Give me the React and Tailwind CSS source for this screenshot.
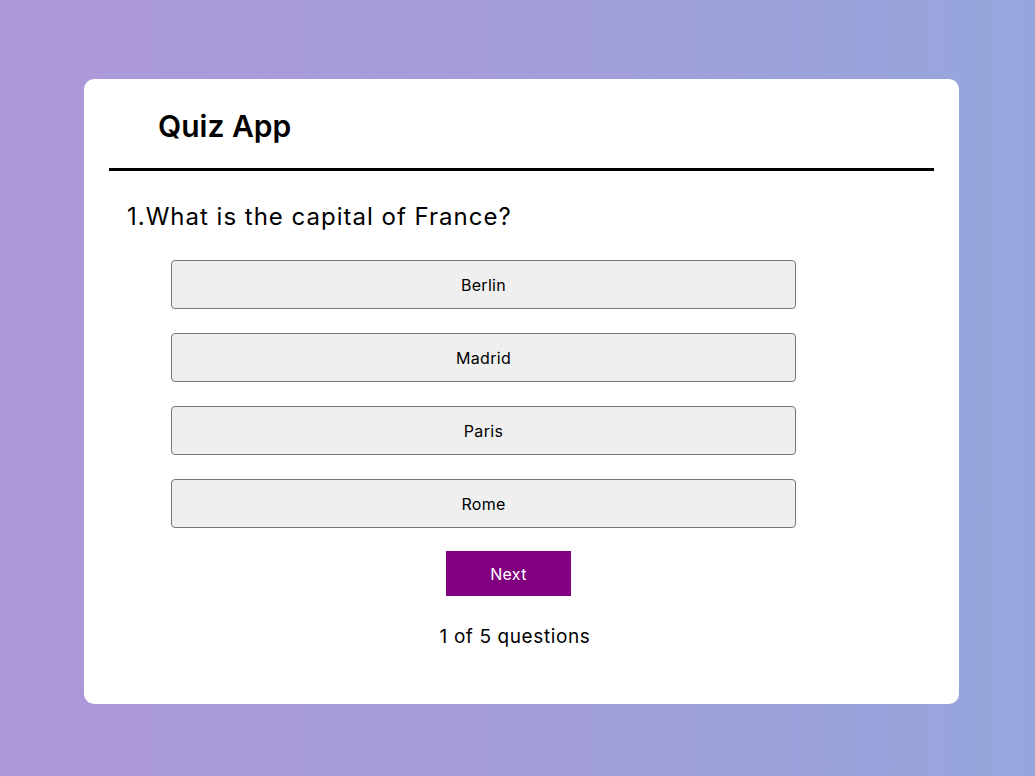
import React from "react";

const options = ["Berlin", "Madrid", "Paris", "Rome"];

export default function App() {
  return (
    <div className="min-h-[776px] w-full bg-[linear-gradient(90deg,#ae98d9_0%,#a69cd9_40%,#96a6dc_100%)] pt-[79px] font-['Inter',sans-serif] text-black">
      <div className="ml-[84px] h-[625px] w-[875px] rounded-[10px] bg-white px-[25px] pt-[25px]">
        {/* header */}
        <h2 className="ml-[49px] text-[30px] font-semibold leading-[45px]">
          Quiz App
        </h2>
        <div className="mt-[19px] h-[3px] w-full bg-black" />

        {/* question */}
        <h3 className="ml-[18px] mt-[28px] text-[24px] font-normal leading-[36px] tracking-[1px]">
          1.What is the capital of France?
        </h3>

        <ul className="ml-[62px] mt-[25px] flex w-[625px] flex-col gap-[24px]">
          {options.map((opt) => (
            <li
              key={opt}
              className="flex h-[49px] items-center justify-center rounded-[4px] border border-[#767676] bg-[#efefef] text-[16px] tracking-[0.3px]"
            >
              {opt}
            </li>
          ))}
        </ul>

        <button className="ml-[337px] mt-[23px] flex h-[45px] w-[125px] items-center justify-center bg-[#800080] text-[16px] tracking-[0.3px] text-white">
          Next
        </button>

        <p className="mt-[27px] pr-[13px] text-center text-[19px] leading-[28px] tracking-[0.6px]">
          1 of 5 questions
        </p>
      </div>
    </div>
  );
}
